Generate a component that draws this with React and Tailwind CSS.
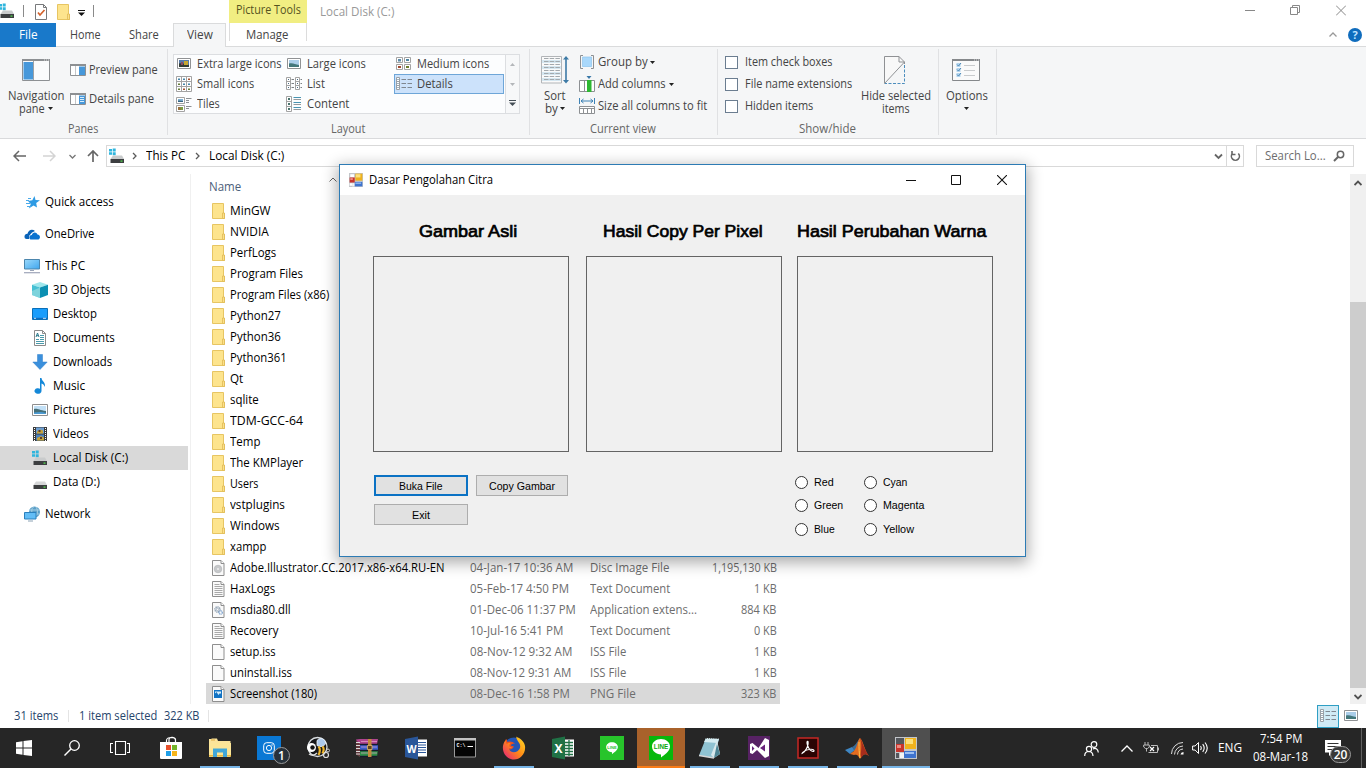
import React, { useLayoutEffect, useRef } from "react";

/* Single line label, condensed horizontally so that it spans `w` pixels. */
function Label({ w, className = "", children }) {
  const box = useRef(null);
  const ink = useRef(null);
  useLayoutEffect(() => {
    const fit = () => {
      box.current.style.width = `${w}px`;
      const natural = ink.current.offsetWidth;
      ink.current.style.transform = `scaleX(${(w + 0.6) / natural})`;
    };
    fit();
    document.fonts.ready.then(fit);
  }, [w]);
  return (
    <span ref={box} className={`block shrink-0 whitespace-nowrap ${className}`}>
      <span ref={ink} className="inline-block origin-left">{children}</span>
    </span>
  );
}

const Svg = ({ w = 16, h = 16, className = "", children }) => (
  <svg width={w} height={h} viewBox={`0 0 ${w} ${h}`} className={`block shrink-0 ${className}`} fill="none">
    {children}
  </svg>
);

/* ---------- file and sidebar icons ---------- */
const Drive = ({ win }) => (
  <Svg>
    {win && <path d="M0 1h3v2.500H0zM3.700 .5h3V3.500h-3zM0 4.200h3v2.500H0zM3.700 4.200h3v3h-3z" fill="#2fb5dd" />}
    <path d="M4 7.500h9L15 11H1.500z" fill={win ? "#c9cbcc" : "#d6d7d8"} />
    <path d="M1.500 11h13.500v4H1.500z" fill="#3c3e40" />
    <path d="M11.500 12.500h2v1.200h-2z" fill="#53e34d" />
  </Svg>
);
const Folder = () => (
  <Svg w={14} h={16}>
    <path d="M.5.5h11v10h1v5H.5z" fill="#fde48d" stroke="#e7c562" />
    <path d="M10.500 15.500v-5.500h2v5.500z" fill="#fbe08a" stroke="#dfba55" strokeWidth=".8" />
  </Svg>
);
const Page = ({ kind }) => (
  <Svg w={14} h={16}>
    <path d="M.5.5h8.500l3 3v12H.5z" fill="#fafafa" stroke="#8e8e8e" />
    <path d="M9 .5v3h3" stroke="#8e8e8e" fill="#fff" />
    {kind === "text" && <path d="M2.500 3.500h5M2.500 5.500h8M2.500 7.500h8M2.500 9.500h8M2.500 11.500h8M2.500 13.500h8" stroke="#a9a9a9" />}
    {kind === "disc" && (
      <>
        <circle cx="6" cy="9" r="3.800" fill="#c6c8ca" stroke="#adafb1" strokeWidth=".6" />
        <circle cx="6" cy="9" r="1" fill="#eee" />
      </>
    )}
    {kind === "dll" && (
      <>
        <circle cx="5.500" cy="7.500" r="2.500" stroke="#8c9eb0" strokeWidth="1.600" strokeDasharray="1.200 .7" />
        <circle cx="5.500" cy="7.500" r="1.200" stroke="#8c9eb0" strokeWidth=".7" />
        <circle cx="8.600" cy="10.500" r="1.700" stroke="#7fa4cf" strokeWidth="1.300" strokeDasharray="1 .5" />
      </>
    )}
    {kind === "image" && (
      <>
        <path d="M2 4h8v8H2z" fill="#1273c4" />
        <path d="M3 7.500L4.500 6l2 3 1.500-2 1 1v-2.500H3z" fill="#d7effc" />
      </>
    )}
  </Svg>
);
const QuickStar = () => (
  <Svg w={17}>
    <path d="M10.500 2l1 4 4.500.3-3.800 2.700.8 4.500-3.500-2-4.700 3 2-4.500L4 7l4.300-.7z" fill="#2e9be4" />
    <path d="M2 6.500h3M2 9.500h4M3 12.500h4M4 4.500h3" stroke="#49a9ea" />
  </Svg>
);
const Cloud = () => (
  <Svg w={17}>
    <path d="M1 12.500C-.5 9.500 1.500 7.500 3.500 7.700 4.500 3.500 8.500 2.500 11 5L8 6.500 5 10v3H2.500z" fill="#0a63b8" />
    <path d="M6.500 13.500c-2-1.300-1.300-4.500 1.300-4.500C8.500 5.800 12.500 5.500 13.500 8.500c3 .2 3.300 4 1 5z" fill="#0a73d0" />
  </Svg>
);
const Monitor = () => (
  <Svg>
    <defs>
      <linearGradient id="scr" x1="0" y1="0" x2="1" y2="1">
        <stop stopColor="#9bd9fb" />
        <stop offset="1" stopColor="#3fa6ee" />
      </linearGradient>
    </defs>
    <path d="M.5 1.500h15v9.500H.5z" fill="url(#scr)" stroke="#4c86ad" />
    <path d="M6 12.500h4" stroke="#9aa4b8" />
    <path d="M0 14.700h16" stroke="#9fa5b9" strokeWidth="1.200" />
  </Svg>
);
const Cube = () => (
  <Svg>
    <path d="M8 0l8 2.800L8 5.500 0 2.800z" fill="#9fe7ec" />
    <path d="M0 2.800l8 2.700V16L0 13z" fill="#45c0d3" />
    <path d="M16 2.800L8 5.500V16l8-3z" fill="#0b8fb2" />
    <path d="M0 9l8-3.500V16L0 13z" fill="#a4dfe2" opacity=".6" />
  </Svg>
);
const DesktopIcon = () => (
  <Svg>
    <path d="M.5 2.500h15v11H.5z" fill="#199dfc" stroke="#0a6fb8" />
    <path d="M1 11.800h14V13H1z" fill="#0c6cc0" />
    <path d="M2 12.300h2M11 12.300h3" stroke="#fff" strokeWidth=".8" />
  </Svg>
);
const DocumentsIcon = () => (
  <Svg>
    <path d="M2.500.5h8l3 3v12h-11z" fill="#fff" stroke="#8b8b8b" />
    <path d="M10.500.5v3h3" stroke="#8b8b8b" />
    <path d="M4 7l1.500-4L7 7M4.500 5.700h2" stroke="#2a7a8c" />
    <path d="M8 5.500h4M8 7.500h4M4 9.500h3M8 9.500h4M4 11.500h8M4 13.500h8" stroke="#4b9aab" />
  </Svg>
);
const DownloadIcon = () => (
  <Svg>
    <path d="M5.500.5h5v7.500h4.700L8 15.500.8 8h4.700z" fill="#3b90dc" stroke="#2f7fca" strokeWidth=".5" />
  </Svg>
);
const MusicIcon = () => (
  <Svg>
    <path d="M8 0h1.500c.3 3.500 4.500 4 3.300 9-.5-2-1.500-3-3.300-3.500V13a3.500 2.800 0 1 1-1.500-2.300z" fill="#1488d8" />
  </Svg>
);
const PictureIcon = () => (
  <Svg>
    <path d="M.5 2.500h15v11H.5z" fill="#fff" stroke="#8e8e8e" />
    <path d="M2 4h12v8H2z" fill="#c2e0f6" />
    <path d="M2 7c3-1 5 1 12 2v2H2z" fill="#466f78" />
    <path d="M2 10.500c4-.5 8-1 12 .5v1H2z" fill="#4c9bd3" />
  </Svg>
);
const VideoIcon = () => (
  <Svg>
    <path d="M1 1h14v14H1z" fill="#3a3a3a" />
    <path d="M2.500 2v13M13.500 2v13" stroke="#fff" strokeDasharray="1 1" />
    <path d="M4 1.500h8v6H4z" fill="#6d9ed2" />
    <path d="M4 8.500h8v6H4z" fill="#4b82bf" />
    <path d="M5 5.500l3-2 3 1v3H5zM5 12l4-2 3 1.500v3H5z" fill="#c5a23a" />
    <path d="M6.500 4h2v2h-2zM8 11h2v2H8z" fill="#5b3d2b" />
  </Svg>
);
const NetworkIcon = () => (
  <Svg w={17}>
    <circle cx="10.500" cy="6" r="5.500" fill="#5b9fc8" />
    <path d="M10 .5c-3 2-3 6 0 11M5.500 4h10M5.500 8h10M12 1c2 3 2 7-1 10" stroke="#b8daea" strokeWidth=".8" />
    <path d="M.5 6.500h11.500V13H.5z" fill="#62bdf6" stroke="#2b80bd" />
    <path d="M4 15h5" stroke="#8ba2b4" />
  </Svg>
);

/* ---------- ribbon icons ---------- */
const PaneIcon = ({ kind }) => (
  <Svg>
    <path d="M.5 2.500h15v11H.5z" fill="#fff" stroke="#8d9093" />
    <path d="M0 2h16v2H0z" fill="#8d9093" />
    <path d="M5.500 4v9" stroke="#c3c6c9" />
    <path d="M9 4.500h6V13H9z" fill="#4798da" />
    {kind === "details" && <path d="M10 6.500h4M10 8.500h4M10 10.500h4" stroke="#d9edfb" />}
  </Svg>
);
const NavPaneIcon = () => (
  <Svg w={28} h={22}>
    <path d="M.5.500h27v21H.5z" fill="#fafbfc" stroke="#8d9093" />
    <path d="M0 0h28v2H0z" fill="#8d9093" />
    <path d="M22 1h1M24 1h1M26 1h1" stroke="#fff" strokeWidth=".7" />
    <path d="M1.500 3h9.500v17.500H1.500z" fill="#4798da" />
    <path d="M11.500 2v19" stroke="#9da1a5" />
  </Svg>
);
const Photo = ({ dark }) => (
  <Svg>
    <path d="M1.500 2.500h13v10h-13z" fill="#fff" stroke="#909294" />
    <path d="M3 4h10v7H3z" fill={dark ? "#557aa8" : "#aacde9"} />
    <path d="M3 7.500c4-1 6 1 10 1.500v2H3z" fill={dark ? "#343d35" : "#43777b"} />
    {dark && <path d="M8 5h4v4H8z" fill="#c7a631" />}
    {dark && <path d="M5 6h2v3H5z" fill="#8e4a60" />}
  </Svg>
);
const MediumGrid = () => (
  <Svg>
    <path d="M.5 1.500h6v5h-6zM8.500 1.500h6v5h-6zM.5 8.500h6v5h-6zM8.500 8.500h6v5h-6z" fill="#fff" stroke="#a3a3a3" />
    <path d="M2 3h3v2.500H2z" fill="#5d8ba9" />
    <path d="M10 3h3v2h-3z" fill="#4c84a2" />
    <path d="M2 10h3v2H2z" fill="#a1462d" />
    <path d="M10 10h3v2h-3z" fill="#6c7d2c" />
  </Svg>
);
const SmallGrid = () => (
  <Svg>
    <path d="M.5.5h15v15H.5zM5.500.500v15M10.500.500v15M.5 5.500h15M.5 10.500h15" fill="#fff" stroke="#a3a3a3" />
    <path d="M2 2.500h2v1.500H2zM7 2.500h2v1.500H7zM7 7.500h2V9H7zM12 7.500h2V9h-2z" fill="#4384a7" />
    <path d="M12 2.500h2v1.500h-2zM7 12.500h2V14H7z" fill="#a4502e" />
    <path d="M2 7.500h2V9H2zM2 12.500h2V14H2zM12 12.500h2V14h-2z" fill="#667d37" />
  </Svg>
);
const ListIcon = () => (
  <Svg>
    <path d="M.5 1.500h4v12h-4zM9.500 1.500h4v12h-4zM.5 5.500h4M.5 9.500h4M9.500 5.500h4M9.500 9.500h4" fill="#fff" stroke="#a3a3a3" />
    <path d="M2 3.500h1M2 7.500h1M2 11.500h1M11 3.500h1M11 7.500h1M11 11.500h1" stroke="#476a85" />
    <path d="M5.500 3.500H8M5.500 7.500H8M5.500 11.500H8M14.500 3.500H16M14.500 7.500H16M14.500 11.500H16" stroke="#7d8184" />
  </Svg>
);
const DetailsIcon = () => (
  <Svg>
    <path d="M.5 1.500h3v12h-3zM.5 5.500h3M.5 9.500h3" fill="#fff" stroke="#9aa0a6" />
    <path d="M1.500 3.500h1M1.500 7.500h1M1.500 11.500h1" stroke="#476a85" />
    <path d="M5.500 3.500h4.500M5.500 7.500h4.500M5.500 11.500h4.500M11.500 3.500H16M11.500 7.500H16M11.500 11.500H16" stroke="#7f8790" />
  </Svg>
);
const TilesIcon = () => (
  <Svg>
    <path d="M.5 1.500h8v6h-8zM.5 9.500h8v6h-8z" fill="#fff" stroke="#a3a3a3" />
    <path d="M2 3h5v3H2z" fill="#7fb0d2" />
    <path d="M2 4.500l5 .5v1H2z" fill="#376481" />
    <path d="M2 11h3v3H2z" fill="#98703c" />
    <path d="M4 11h3v3H5z" fill="#7b9c42" />
    <path d="M10 2.500h5.500M10 4.500h3M10 6.500h3M10 10.500h5.500M10 12.500h3" stroke="#8b8f93" />
  </Svg>
);
const ContentIcon = () => (
  <Svg>
    <path d="M.5.5h5v15h-5zM.5 5.500h5M.5 10.500h5" fill="#fff" stroke="#a3a3a3" />
    <path d="M2 3h2M2 8h2M2 13h2" stroke="#49736d" strokeWidth="2" />
    <path d="M7.500 1.500H15M7.500 6.500H15M7.500 11.500H15" stroke="#4994b2" />
    <path d="M7.500 3.500H15M7.500 8.500H15M7.500 13.500H15" stroke="#95999c" />
  </Svg>
);
const SortIcon = () => (
  <Svg w={28} h={28}>
    <path d="M.5.5h20v26.500H.5z" fill="#fafafa" stroke="#b2b5b8" />
    <path d="M1 4h19v3H1zM1 10h19v3H1zM1 16h19v3H1zM1 22h19v3H1z" fill="#d5e7f1" />
    <path d="M3 2.500h16M3 5.500h16M3 8.500h16M3 11.500h16M3 14.500h16M3 17.500h16M3 20.500h16M3 23.500h16" stroke="#a3a9ad" strokeDasharray="4.500 1.200" />
    <path d="M25 2v24" stroke="#3d7aa6" strokeWidth="1.600" />
    <path d="M22 3.500l3-3.500 3 3.500zM22 24l3 3.500 3-3.500z" fill="#3d7aa6" />
  </Svg>
);
const GroupIcon = () => (
  <Svg>
    <path d="M4 1.500H1.500v13H4M12 1.500h2.500v13H12" stroke="#8d9093" />
    <path d="M3.500 3h9v9.500h-9z" fill="#a9d8fb" stroke="#8cc4ee" strokeWidth=".7" />
  </Svg>
);
const AddColIcon = () => (
  <Svg>
    <path d="M.5 4.500h15v11H.5zM5.500 4.500v11" fill="#fff" stroke="#8d9093" />
    <path d="M8 4h4.500v12H8z" fill="#2eb832" />
    <path d="M7.500 0h5l-2.500 3z" fill="#3978a8" />
  </Svg>
);
const SizeColIcon = () => (
  <Svg>
    <path d="M.5 0v6M15.500 0v6M2 3h12M4.500 1L2 3l2.500 2M11.500 1L14 3l-2.500 2" stroke="#3d82b5" />
    <path d="M.5 8.500h15v7H.5zM.5 10.500h15M4.500 10.500v5M8.500 10.500v5M12.500 10.500v5" fill="#fff" stroke="#8d9093" />
  </Svg>
);
const HideIcon = () => (
  <Svg w={22} h={28}>
    <path d="M.500 27V.5H15l5.500 5.500z" fill="#f8f8f8" />
    <path d="M20.500 8V6L15 .5H.5v27L20.500 6M15 .5V6h5.500" stroke="#8f9194" />
    <path d="M20.500 9v18.500H1" stroke="#4b8dbd" strokeDasharray="3 1.500" />
  </Svg>
);
const OptionsIcon = () => (
  <Svg w={28} h={22}>
    <path d="M.5.500h27v21H.5z" fill="#fafafa" stroke="#85888b" />
    <path d="M0 0h28v2H0z" fill="#85888b" />
    <path d="M22 1h1M24 1h1M26 1h1" stroke="#fff" strokeWidth=".7" />
    <path d="M4.500 4h4v4h-4zM4.500 9h4v4h-4zM4.500 14h4v4h-4z" fill="#b4d5ee" />
    <path d="M5 5.500L6.500 7 9 4M5 10.500L6.500 12 9 9M5 15.500L6.500 17 9 14" stroke="#4a86b4" />
    <path d="M12 6.500h11M12 11.500h11M12 16.500h11" stroke="#c9cbcd" />
  </Svg>
);
const Caret = ({ className = "" }) => (
  <Svg w={5} h={3} className={className}>
    <path d="M0 0h5L2.500 3z" fill="#222" />
  </Svg>
);
const Chevron = ({ className = "" }) => (
  <Svg w={5} h={8} className={className}>
    <path d="M1 1l3 3-3 3" stroke="#5a5a5a" strokeWidth="1.300" />
  </Svg>
);
const WinForms = ({ size = 14 }) => (
  <svg width={size} height={size} viewBox="0 0 22 22" className="block shrink-0">
    <path d="M0 0h22v22H0z" fill="#c3c6ca" />
    <path d={size > 14 ? "M1 1h8v6H1zM1 16h3v5H1z" : "M2 2h6v5H2zM1 16h4v4H1z"} fill={size > 14 ? "#54575c" : "#fff"} />
    <path d="M5 16h4v5H5z" fill="#f4f4f4" />
    <path d="M1 7h8v8H1z" fill="#c9342c" />
    <path d="M2 8h4v3H2z" fill="#ee8a80" />
    <path d="M10 1h11v11H10z" fill="#efb21d" />
    <path d="M11 2h7v5h-7z" fill="#fbe07c" />
    <path d="M9 14h12v7H9z" fill="#3f74cf" />
    <path d="M10 15h9v2h-9z" fill="#9dc0f2" />
  </svg>
);

/* ---------- top of the explorer window ---------- */
function TitleBar() {
  return (
    <div className="flex h-[23px] shrink-0 items-start">
      <div className="-ml-px pt-[3px]"><Drive win /></div>
      <div className="ml-[8px] mt-[5px] h-[12px] w-px bg-[#8a8a8a]" />
      <Svg w={12} className="ml-[11px] mt-[4px]">
        <path d="M.5.500h8l3 3v12H.5z" fill="#fff" stroke="#77797b" />
        <path d="M8.500.500v3h3" stroke="#77797b" />
        <path d="M3 8.500L5 11l4.500-5" stroke="#d3622c" strokeWidth="1.700" />
      </Svg>
      <div className="ml-[10px] mt-[4px]"><Folder /></div>
      <Svg w={7} h={6} className="ml-[7px] mt-[10px]">
        <path d="M0 .5h7" stroke="#111" />
        <path d="M0 2.500h7L3.500 6z" fill="#111" />
      </Svg>
      <div className="ml-[8px] mt-[5px] h-[12px] w-px bg-[#8a8a8a]" />
      <div className="ml-[135px] flex h-[23px] w-[78px] justify-center bg-[#f1ee82] text-[#55531f]">
        <Label w={64} className="leading-[20px]">Picture Tools</Label>
      </div>
      <Label w={74} className="ml-[13px] leading-[24px] text-[#999]">Local Disk (C:)</Label>
      <div className="ml-auto flex pr-[20px] pt-[5px]">
        <Svg w={10} h={11}><path d="M0 5.500h10" stroke="#888" /></Svg>
        <Svg w={10} h={11} className="ml-[35px]"><path d="M.5 2.500h7v7h-7zM2.500 2.500v-2h7v7h-2" stroke="#888" /></Svg>
        <Svg w={10} h={11} className="ml-[36px]"><path d="M0 .5l10 10M10 .5l-10 10" stroke="#888" /></Svg>
      </div>
    </div>
  );
}

function Tabs() {
  return (
    <div className="flex h-[24px] shrink-0 leading-[24px] text-[#444]">
      <div className="flex w-[56px] justify-center bg-[#1979ca] text-white"><Label w={18}>File</Label></div>
      <div className="flex w-[117px] border-b border-[#dadbdc] pl-[14px]">
        <Label w={30}>Home</Label>
        <Label w={29} className="ml-[29px]">Share</Label>
      </div>
      <div className="flex w-[53px] justify-center border-x border-t border-[#dadbdc] bg-[#f5f6f7] leading-[22px]"><Label w={25}>View</Label></div>
      <div className="w-[3px] border-b border-[#dadbdc]" />
      <div className="flex w-[78px] border-b border-[#dadbdc]">
        <div className="h-[18px] w-px bg-[#dcdcdc]" />
        <Label w={42} className="ml-[16px]">Manage</Label>
        <div className="ml-auto h-[18px] w-px bg-[#dcdcdc]" />
      </div>
      <div className="flex grow items-center justify-end border-b border-[#dadbdc] pr-[4px]">
        <Svg w={8} h={5} className="mr-[11px]"><path d="M.5 4.500L4 1l3.500 3.500" stroke="#999" strokeWidth="1.300" /></Svg>
        <div className="flex h-[14px] w-[14px] items-center justify-center rounded-full bg-[#0f6cbd] text-[11px] font-bold leading-[14px] text-[#bfe3ff]">?</div>
      </div>
    </div>
  );
}

function Group({ className, title, tw, children }) {
  return (
    <div className={`relative flex shrink-0 flex-col ${className}`}>
      <div className="flex h-[75px]">{children}</div>
      <div className="flex h-[14px] justify-center pr-[3px] leading-[14px] text-[#666]">{title && <Label w={tw}>{title}</Label>}</div>
      <div className="absolute right-0 top-[2px] h-[86px] w-px bg-[#e0e1e3]" />
    </div>
  );
}

function BigButton({ className = "", icon, children }) {
  return (
    <div className={`flex flex-col items-center leading-[13px] ${className}`}>
      <div className="flex h-[42px] items-center pt-[4px]">{icon}</div>
      {children}
    </div>
  );
}

function ViewCell({ icon, w, active, children }) {
  return (
    <div className={`flex h-[20px] items-center gap-[5px] border pl-px ${active ? "border-[#6ea6d8] bg-[#cce2fb]" : "border-transparent"}`}>
      {icon}
      <Label w={w} className="leading-[18px]">{children}</Label>
    </div>
  );
}

const Check = ({ w, children }) => (
  <div className="flex h-[22px] items-center gap-[7px]">
    <div className="h-[13px] w-[13px] border border-[#6b7d90] bg-white" />
    <Label w={w}>{children}</Label>
  </div>
);

function Ribbon() {
  return (
    <div className="flex h-[92px] shrink-0 border-b border-[#d9dadc] bg-[#f5f6f7] text-[#444]">
      <Group className="w-[168px]" title="Panes" tw={30}>
        <BigButton className="w-[70px] pl-[2px]" icon={<NavPaneIcon />}>
          <Label w={56}>Navigation</Label>
          <div className="flex items-center gap-[4px]"><Label w={25}>pane</Label><Caret /></div>
        </BigButton>
        <div className="flex flex-col gap-[13px] pt-[15px]">
          <div className="flex h-[16px] items-center gap-[3px]"><PaneIcon /><Label w={68}>Preview pane</Label></div>
          <div className="flex h-[16px] items-center gap-[3px]"><PaneIcon kind="details" /><Label w={64}>Details pane</Label></div>
        </div>
      </Group>
      <Group className="w-[362px]" title="Layout" tw={34}>
        <div className="ml-[5px] mt-[7px] flex h-[60px] w-[347px] border border-[#dcdee1] bg-[#fcfdfe]">
          <div className="-mt-px grid w-[331px] grid-cols-[110px_110px_110px] grid-rows-[20px_20px_20px]">
            <ViewCell icon={<Photo dark />} w={84}>Extra large icons</ViewCell>
            <ViewCell icon={<Photo />} w={58}>Large icons</ViewCell>
            <ViewCell icon={<MediumGrid />} w={72}>Medium icons</ViewCell>
            <ViewCell icon={<SmallGrid />} w={57}>Small icons</ViewCell>
            <ViewCell icon={<ListIcon />} w={17}>List</ViewCell>
            <ViewCell icon={<DetailsIcon />} w={35} active>Details</ViewCell>
            <ViewCell icon={<TilesIcon />} w={22}>Tiles</ViewCell>
            <ViewCell icon={<ContentIcon />} w={42}>Content</ViewCell>
          </div>
          <div className="flex grow flex-col items-center border-l border-[#dcdee1] bg-[#f7f8f9]">
            <Svg w={5} h={3} className="mt-[8px]"><path d="M0 3h5L2.500 0z" fill="#b4b7ba" /></Svg>
            <Svg w={5} h={3} className="mt-[17px]"><path d="M0 0h5L2.500 3z" fill="#b4b7ba" /></Svg>
            <Svg w={7} h={6} className="mt-[14px]"><path d="M0 .5h7" stroke="#444d55" /><path d="M0 2.500h7L3.500 6z" fill="#444d55" /></Svg>
          </div>
        </div>
      </Group>
      <Group className="w-[188px]" title="Current view" tw={65}>
        <BigButton className="w-[49px]" icon={<SortIcon />}>
          <Label w={21}>Sort</Label>
          <div className="flex items-center gap-[3px]"><Label w={12}>by</Label><Caret /></div>
        </BigButton>
        <div className="flex flex-col pt-[4px]">
          <div className="flex h-[22px] items-center"><GroupIcon /><Label w={49} className="ml-[3px] mr-[3px]">Group by</Label><Caret /></div>
          <div className="flex h-[22px] items-center"><AddColIcon /><Label w={67} className="ml-[3px] mr-[4px]">Add columns</Label><Caret /></div>
          <div className="flex h-[22px] items-center"><SizeColIcon /><Label w={109} className="ml-[3px]">Size all columns to fit</Label></div>
        </div>
      </Group>
      <Group className="w-[221px]" title="Show/hide" tw={56}>
        <div className="flex w-[140px] flex-col pl-[7px] pt-[4px]">
          <Check w={87}>Item check boxes</Check>
          <Check w={107}>File name extensions</Check>
          <Check w={68}>Hidden items</Check>
        </div>
        <BigButton className="w-[74px]" icon={<HideIcon />}>
          <Label w={69}>Hide selected</Label>
          <Label w={27}>items</Label>
        </BigButton>
      </Group>
      <Group className="w-[58px]">
        <BigButton className="w-[54px]" icon={<OptionsIcon />}>
          <Label w={41}>Options</Label>
          <Caret className="mt-[5px]" />
        </BigButton>
      </Group>
    </div>
  );
}

function AddressBar() {
  return (
    <div className="flex h-[35px] shrink-0 items-start pt-[6px]">
      <div className="flex h-[22px] w-[106px] items-center">
        <Svg w={13} h={12} className="ml-[13px]"><path d="M6 1L1 6l5 5M1 6h12" stroke="#666" strokeWidth="1.500" /></Svg>
        <Svg w={13} h={12} className="ml-[17px]"><path d="M7 1l5 5-5 5M12 6H0" stroke="#d4d4d4" strokeWidth="1.500" /></Svg>
        <Svg w={7} h={5} className="ml-[13px]"><path d="M.5 1l3 3 3-3" stroke="#777" strokeWidth="1.300" /></Svg>
        <Svg w={12} h={12} className="ml-[11px]"><path d="M1 6l5-5 5 5M6 1v11" stroke="#666" strokeWidth="1.700" /></Svg>
      </div>
      <div className="flex h-[22px] w-[1138px] items-center border border-[#d9d9d9] text-black">
        <div className="ml-[2px]"><Drive win /></div>
        <Chevron className="ml-[7px]" />
        <Label w={39} className="ml-[9px]">This PC</Label>
        <Chevron className="ml-[10px]" />
        <Label w={75} className="ml-[9px]">Local Disk (C:)</Label>
        <Svg w={9} h={7} className="ml-auto"><path d="M1 1.500l3.500 3.500L8 1.500" stroke="#666" strokeWidth="1.800" /></Svg>
        <div className="ml-[3px] flex h-full w-[17px] items-center justify-center border-l border-[#d9d9d9]">
          <Svg w={11} h={12}><path d="M2.500 3.500a4 4 0 1 0 5.800 0M2 1v3.500h3.500" stroke="#666" strokeWidth="1.600" /></Svg>
        </div>
      </div>
      <div className="ml-[12px] flex h-[22px] w-[98px] items-center border border-[#d9d9d9] text-[#6d6d6d]">
        <Label w={60} className="ml-[8px]">Search Lo...</Label>
        <Svg w={12} h={12} className="ml-[8px]"><circle cx="7.500" cy="4.500" r="3.200" stroke="#666" strokeWidth="1.500" /><path d="M5 7L1 11" stroke="#666" strokeWidth="1.900" /></Svg>
      </div>
    </div>
  );
}

/* ---------- body ---------- */
const places = [
  ["Quick access", 68, <QuickStar />, false, true],
  ["OneDrive", 49, <Cloud />, false, true],
  ["This PC", 40, <Monitor />, false, false],
  ["3D Objects", 57, <Cube />, true],
  ["Desktop", 43, <DesktopIcon />, true],
  ["Documents", 61, <DocumentsIcon />, true],
  ["Downloads", 59, <DownloadIcon />, true],
  ["Music", 32, <MusicIcon />, true],
  ["Pictures", 42, <PictureIcon />, true],
  ["Videos", 35, <VideoIcon />, true],
  ["Local Disk (C:)", 75, <Drive win />, true, false, true],
  ["Data (D:)", 46, <Drive />, true, true],
  ["Network", 45, <NetworkIcon />, false],
];

function Sidebar() {
  return (
    <div className="flex w-[191px] shrink-0 flex-col border-r border-[#f0f0f0] pt-[16px] text-black">
      {places.map(([name, w, icon, nested, gap, active]) => (
        <div
          key={name}
          className={`flex h-[24px] w-[188px] shrink-0 items-center ${nested ? "pl-[32px]" : "pl-[24px]"} ${gap ? "mb-[8px]" : ""} ${active ? "bg-[#d9d9d9]" : ""}`}
        >
          <div className="w-[21px]">{icon}</div>
          <Label w={w}>{name}</Label>
        </div>
      ))}
    </div>
  );
}

const folders = [
  ["MinGW", 40], ["NVIDIA", 38], ["PerfLogs", 46], ["Program Files", 72], ["Program Files (x86)", 99],
  ["Python27", 50], ["Python36", 50], ["Python361", 56], ["Qt", 13], ["sqlite", 28], ["TDM-GCC-64", 72],
  ["Temp", 30], ["The KMPlayer", 73], ["Users", 28], ["vstplugins", 54], ["Windows", 49], ["xampp", 36],
];
const files = [
  ["Adobe.Illustrator.CC.2017.x86-x64.RU-EN", 214, "disc", "04-Jan-17 10:36 AM", 103, "Disc Image File", 79, "1,195,130 KB", 64],
  ["HaxLogs", 45, "text", "05-Feb-17 4:50 PM", 98, "Text Document", 80, "1 KB", 22],
  ["msdia80.dll", 60, "dll", "01-Dec-06 11:37 PM", 105, "Application extens...", 106, "884 KB", 35],
  ["Recovery", 48, "text", "10-Jul-16 5:41 PM", 93, "Text Document", 80, "0 KB", 22],
  ["setup.iss", 45, "", "08-Nov-12 9:32 AM", 102, "ISS File", 36, "1 KB", 22],
  ["uninstall.iss", 61, "", "08-Nov-12 9:31 AM", 101, "ISS File", 36, "1 KB", 22],
  ["Screenshot (180)", 86, "image", "08-Dec-16 1:58 PM", 99, "PNG File", 45, "323 KB", 35],
];

function FileList() {
  return (
    <div className="flex grow flex-col pl-[15px] text-black">
      <div className="flex h-[26px] shrink-0 items-start pt-[3px] text-[#4c607a]">
        <Label w={32} className="ml-[3px] leading-[20px]">Name</Label>
        <Svg w={8} h={5} className="ml-[88px]"><path d="M.5 4.500L4 1l3.500 3.500" stroke="#666" /></Svg>
      </div>
      {folders.map(([name, w]) => (
        <div key={name} className="flex h-[21px] w-[574px] shrink-0 items-center pl-[6px]">
          <Folder />
          <Label w={w} className="ml-[4px]">{name}</Label>
        </div>
      ))}
      {files.map(([name, w, kind, date, dw, type, tw, size, sw]) => (
        <div key={name} className={`flex h-[21px] w-[574px] shrink-0 items-center pl-[6px] ${kind === "image" ? "bg-[#d9d9d9]" : ""}`}>
          <Page kind={kind} />
          <div className="ml-[4px] flex w-[240px]"><Label w={w}>{name}</Label></div>
          <div className="flex w-[120px] text-[#6d6d6d]"><Label w={dw}>{date}</Label></div>
          <div className="flex w-[110px] text-[#6d6d6d]"><Label w={tw}>{type}</Label></div>
          <div className="flex w-[76px] justify-end text-[#6d6d6d]"><Label w={sw}>{size}</Label></div>
        </div>
      ))}
    </div>
  );
}

function ScrollBar() {
  return (
    <div className="flex w-[16px] shrink-0 flex-col items-center justify-between bg-[#f0f0f0] pt-[6px] pb-[4px]">
      <Svg w={8} h={6}><path d="M.5 5L4 1.500 7.500 5" stroke="#505050" strokeWidth="1.800" /></Svg>
      <div className="mt-auto h-[386px] w-[16px] bg-[#cdcdcd]" />
      <Svg w={8} h={6} className="mt-[6px]"><path d="M.5 1L4 4.500 7.500 1" stroke="#505050" strokeWidth="1.800" /></Svg>
    </div>
  );
}

function StatusBar() {
  return (
    <div className="flex h-[24px] shrink-0 items-center text-[#26446b]">
      <Label w={44} className="ml-[14px]">31 items</Label>
      <div className="ml-[10px] h-[12px] w-px bg-[#e4e4e4]" />
      <Label w={78} className="ml-[10px]">1 item selected</Label>
      <Label w={35} className="ml-[7px]">322 KB</Label>
      <div className="ml-[9px] h-[12px] w-px bg-[#e4e4e4]" />
      <div className="ml-auto flex h-[23px] w-[22px] items-center justify-center border border-[#2f9fc4] bg-[#cfeaf5]"><DetailsIcon /></div>
      <div className="ml-[4px] mr-[7px]"><Photo /></div>
    </div>
  );
}

/* ---------- dialog ---------- */
const Radio = ({ w, children }) => (
  <div className="flex h-[13px] items-center gap-[6px] leading-[13px]">
    <div className="h-[13px] w-[13px] rounded-full border border-[#333] bg-white" />
    <Label w={w}>{children}</Label>
  </div>
);
const Picture = ({ w, title, className = "", shift = "" }) => (
  <div className={`flex w-[196px] flex-col items-center ${className}`}>
    <div className={`flex pt-px ${shift}`}>
      <Label w={w} className="text-[17px] leading-[24px] [-webkit-text-stroke:0.7px_#000]">{title}</Label>
    </div>
    <div className="mt-[12px] h-[196px] w-[196px] border border-[#646464]" />
  </div>
);
const Button = ({ w, className, children }) => (
  <div className={`flex h-[21px] items-center justify-center bg-[#e1e1e1] pr-[2px] ${className}`}><Label w={w}>{children}</Label></div>
);

function Dialog() {
  return (
    <div className="absolute left-[339px] top-[164px] flex h-[393px] w-[687px] flex-col border border-[#2d7bb4] bg-[#f0f0f0] text-black shadow-[0_4px_14px_2px_rgba(0,0,0,0.32)]">
      <div className="flex h-[30px] items-center bg-white pl-[9px]">
        <WinForms size={14} />
        <Label w={123} className="ml-[6px]">Dasar Pengolahan Citra</Label>
        <div className="ml-auto flex pr-[18px]">
          <Svg w={10} h={10}><path d="M0 5.500h10" stroke="#111" /></Svg>
          <Svg w={10} h={10} className="ml-[35px]"><path d="M.5.500h9v9h-9z" stroke="#111" /></Svg>
          <Svg w={10} h={10} className="ml-[36px]"><path d="M0 0l10 10M10 0L0 10" stroke="#111" strokeWidth="1.100" /></Svg>
        </div>
      </div>
      <div className="flex grow flex-col font-['Liberation_Sans',sans-serif] text-[11px]">
        <div className="flex pl-[33px] pt-[24px]">
          <Picture w={98} title="Gambar Asli" shift="pr-[7px]" />
          <Picture w={159} title="Hasil Copy Per Pixel" className="ml-[17px]" shift="pr-[3px]" />
          <Picture w={189} title="Hasil Perubahan Warna" className="ml-[15px]" shift="pr-[7px]" />
        </div>
        <div className="flex pl-[34px] pt-[23px]">
          <div className="flex flex-col gap-[8px]">
            <div className="flex gap-[8px]">
              <Button w={43} className="w-[94px] border-2 border-[#0b72c4]">Buka File</Button>
              <Button w={65} className="w-[92px] border border-[#adadad]">Copy Gambar</Button>
            </div>
            <Button w={17} className="w-[94px] border border-[#adadad]">Exit</Button>
          </div>
          <div className="ml-[227px] grid grid-cols-[69px_69px] grid-rows-[23px_24px_14px] pt-px">
            <Radio w={19}>Red</Radio>
            <Radio w={24}>Cyan</Radio>
            <Radio w={29}>Green</Radio>
            <Radio w={41}>Magenta</Radio>
            <Radio w={20}>Blue</Radio>
            <Radio w={30}>Yellow</Radio>
          </div>
        </div>
      </div>
    </div>
  );
}

/* ---------- taskbar ---------- */
const Store = () => (
  <Svg w={24} h={24}>
    <path d="M7.500 7V4.500C7.500.5 16.500.5 16.500 4.500V7M10 6V3.500c0-3.500 7-2.500 6.500 1" stroke="#fff" strokeWidth="1.200" />
    <path d="M1 6h22v15.500c0 1-.5 1.500-1.500 1.500h-19C1.500 23 1 22.500 1 21.500z" fill="#fff" />
    <path d="M7 9h5v5H7z" fill="#e8502b" /><path d="M13 9h5v5h-5z" fill="#74b52b" />
    <path d="M7 15h5v5H7z" fill="#1f9fe8" /><path d="M13 15h5v5h-5z" fill="#f6b51a" />
  </Svg>
);
const Explorer = () => (
  <Svg w={22} h={20}>
    <path d="M0 1h2l1-.5h5L9 3h12.500v16H0z" fill="#fae39a" />
    <path d="M0 5h22v13H0z" fill="#fbe597" />
    <path d="M0 17h22v1.500H0z" fill="#e9b93f" />
    <path d="M4 10.500h14V19h-4v-4.500H8V19H4z" fill="#40a7d8" />
    <path d="M2 2h4" stroke="#dba940" />
  </Svg>
);
const Insta = () => (
  <div className="relative flex h-[24px] w-[24px] items-center justify-center bg-[#0a78d4]">
    <Svg w={12} h={12}><rect x=".7" y=".7" width="10.600" height="10.600" rx="3" stroke="#fff" /><circle cx="6" cy="6" r="2.600" stroke="#fff" /><circle cx="9" cy="3" r=".7" fill="#fff" /></Svg>
    <div className="absolute left-[16px] top-[11px] h-[17px] w-[17px] rounded-full border border-[#9a9a9a] bg-[#27313a] text-center text-[12px] font-semibold leading-[15px] text-white">1</div>
  </div>
);
const Bee = () => (
  <Svg w={26} h={24}>
    <circle cx="12.500" cy="11" r="9.500" fill="#17181a" stroke="#d9dde0" strokeWidth="1.300" />
    <path d="M12 4.500c4-4 9-1 8.500 3-1 3-5 4-8.500 2z" fill="#acc9eb" stroke="#f2f6fa" strokeWidth=".8" />
    <path d="M13.500 10.500c2 2 1.500 6 0 8.500M17.500 10.500c2 2 1 5 0 7" stroke="#efb62c" strokeWidth="2.200" />
    <circle cx="6.500" cy="11.500" r="4.500" fill="#fff" /><circle cx="7.500" cy="11.500" r="2.200" fill="#111" />
    <path d="M4 18c3 2 6 1 8-1" stroke="#ddd" strokeWidth="1.500" />
    <circle cx="21" cy="19" r="2.500" stroke="#ddd" strokeWidth="1.200" /><circle cx="23" cy="14.500" r="1.500" stroke="#ccc" />
  </Svg>
);
const Rar = () => (
  <Svg w={24} h={20}>
    <path d="M1 1.500L5 1h18l-1 5.500H2z" fill="#b0458f" /><path d="M2 6.500h21v6H2z" fill="#3b5fcb" /><path d="M1 12.500h22l-1 6H4z" fill="#2f9148" />
    <path d="M1 2l4 4v13l-4-2.500z" fill="#62383c" />
    <path d="M1 4.500h4M1 7.500h4M1 10.500h4M1 13.500h4M1 16h4" stroke="#ddd" />
    <path d="M6 3.500h16M6 9h16M6 15h16" stroke="#e3a8cf" strokeWidth=".7" />
    <path d="M5 6.500h18M5 12.500h18M5 18.500h17" stroke="#171a2c" strokeWidth="1.300" />
    <path d="M13 1h3.500v18H13z" fill="#c28a3c" /><path d="M12.500 7.500h4.500v4h-4.500z" fill="#5f421d" stroke="#dfb864" strokeWidth=".8" />
  </Svg>
);
const Office = ({ letter, color }) => (
  <Svg w={24} h={24}>
    <path d="M11 3.500h12v17H11z" fill="#fff" />
    {letter === "W" ? (
      <path d="M14 6.500h8M14 9h8M14 11.500h8M14 14h8M14 16.500h8" stroke={color} />
    ) : (
      <path d="M14 6.500h8M14 9.500h8M14 12.500h8M14 15.500h8M14 18.500h8M18 4v16" stroke={color} strokeWidth="1.300" />
    )}
    <path d="M1 3l13-2.500v23L1 21z" fill={color} />
    <text x="7.500" y="16.500" textAnchor="middle" fill="#fff" fontSize={letter === "W" ? 10.5 : 12} fontWeight="700" fontFamily="Open Sans">{letter}</text>
  </Svg>
);
const Cmd = () => (
  <Svg w={22} h={20}>
    <path d="M.500.500h21v18.500H.5z" fill="#050505" stroke="#9a9a9a" /><path d="M0 0h22v2.500H0z" fill="#c3c3c3" />
    <text x="2.500" y="8.500" fill="#fff" fontSize="5" fontFamily="Liberation Mono" fontWeight="700">C:\</text>
    <path d="M13.500 8.500h5.500" stroke="#fff" />
  </Svg>
);
const Firefox = () => (
  <Svg w={24} h={24}>
    <defs><linearGradient id="fox" x1="1" y1="0" x2="0" y2="1"><stop stopColor="#ffe226" /><stop offset=".5" stopColor="#ff8a16" /><stop offset="1" stopColor="#e31587" /></linearGradient></defs>
    <circle cx="12" cy="12" r="10.500" fill="#2456b5" />
    <path d="M14.500 1c4 1 8 5 8.500 9 1 8-5 13.500-11 13.500C5 23.500 0 17 1 10c.5-3 1.500-5 3-6l1 3c2-1 4-1 6 0-2 .5-3 2-3 3l3 1c-1 2-3 2-4 2 2 5 9 4 11-1 .8-4-1-5-2.500-7.500-1-2-1.500-3-1-4.500z" fill="url(#fox)" />
    <path d="M4 3.500l1 3.500c2-1.500 4-1 6 0-3 .5-3 2-3 3l3 1c-1 2-3 2-4 2" stroke="#ed511f" strokeWidth="1.300" />
  </Svg>
);
const LineIcon = ({ big }) => (
  <Svg w={24} h={24}>
    <path d="M0 0h24v24H0z" fill={big ? "#07b80c" : "#27c42b"} />
    <g transform={big ? "translate(2 2)" : "translate(5.500 5.500) scale(.65)"}>
      <path d="M10 1c5 0 9 3.200 9 7.500 0 5-6 8.500-9 11v-3C5 16 1 13 1 8.500 1 4.200 5 1 10 1z" fill="#fff" />
      <text x="10" y="11" textAnchor="middle" fill={big ? "#07a80c" : "#27c42b"} fontSize="6.300" fontWeight="800" fontFamily="Liberation Sans">LINE</text>
    </g>
  </Svg>
);
const Notepad = () => (
  <Svg w={24} h={22}>
    <path d="M8 1l13 1-5 19L1 18.500z" fill="#8fc3d2" /><path d="M8 1l13 1-1.500 4L6 5z" fill="#d5edf2" />
    <path d="M19 3l3 14-6 4-3-3z" fill="#d9e9ec" /><path d="M16 21l6-4-3-10z" fill="#4e8594" />
    <path d="M1 18.500L16 21" stroke="#d7d7d7" strokeWidth="1.500" /><path d="M8 1.500h13" stroke="#777" strokeDasharray="1 1" />
  </Svg>
);
const VS = () => (
  <Svg w={22} h={24}>
    <path d="M0 0h22v24H0z" fill="#68217a" opacity=".75" />
    <path d="M2 8l2.500-1 6 5L17 2l4 2v16l-4 2-8-8-4.500 4L2 17z" fill="#fff" />
    <path d="M4 10v5l2.500-2.500zM17 8.500v7L12 12z" fill="#68217a" />
  </Svg>
);
const Acrobat = () => (
  <Svg w={22} h={22}>
    <path d="M1 1h20v20H1z" fill="#2a0504" stroke="#c52825" strokeWidth="1.500" />
    <path d="M5 16.500c3-1 7-8 6-12-1.500-1-1.500 3 1 7 1.500 2.500 4 3.500 5 2.500.5-1.500-2.500-2-5-1.500-3 .5-7 2.500-7 4z" stroke="#fff" strokeWidth="1.100" />
  </Svg>
);
const Matlab = () => (
  <Svg w={24} h={22}>
    <path d="M0 13l7-3 3 3-5 4z" fill="#3f87c4" /><path d="M7 10c3-1 5-5 8-9l-3 12-2 2z" fill="#3d6b93" />
    <path d="M5 17l4-3c3-3 4-12 6-13 3 2 5 14 9 18-4-3-6-2-9 3-2-4-3-5-6-4z" fill="#e26c20" />
    <path d="M15 1c2 2 4 11 9 18-4-3-5-2-8 2-1-6 2-12-1-20z" fill="#a72d1c" /><path d="M14 5c0 6 0 11 1 16" stroke="#ffc34d" />
  </Svg>
);

const apps = [
  [<Store />, ""], [<Explorer />, "line"], [<Insta />, ""], [<Bee />, ""], [<Rar />, ""],
  [<Office letter="W" color="#2a5699" />, ""], [<Cmd />, ""], [<Firefox />, "line"], [<Office letter="X" color="#1f7145" />, ""],
  [<LineIcon />, ""], [<LineIcon big />, "alert"], [<Notepad />, "line"], [<VS />, "line"], [<Acrobat />, "line"],
  [<Matlab />, "line"], [<WinForms size={22} />, "active"],
];
const slotStyle = {
  "": ["", ""],
  line: ["", "w-[40px] bg-[#76b4e6]"],
  alert: ["bg-[#a9622b]", "w-[48px] bg-[#f87b17]"],
  active: ["bg-[#4f4f4f]", "w-[48px] bg-[#76b4e6]"],
};

function Taskbar() {
  return (
    <div className="flex h-[40px] shrink-0 items-stretch bg-[#262626] text-white">
      <div className="flex w-[48px] items-center justify-center">
        <Svg><path d="M0 2.300l6.500-1v6.200H0zM7.500 1.100L16 0v7.500H7.500zM0 8.500h6.500v6.200L0 13.700zM7.500 8.500H16V16l-8.500-1.100z" fill="#fff" /></Svg>
      </div>
      <div className="flex w-[48px] items-center justify-center">
        <Svg><circle cx="10.500" cy="5.500" r="4.800" stroke="#fff" strokeWidth="1.300" /><path d="M7 9L.5 15.500" stroke="#fff" strokeWidth="1.400" /></Svg>
      </div>
      <div className="flex w-[48px] items-center justify-center">
        <Svg w={20} h={16}><path d="M5.500 1.500h10v13h-10zM3 3.500H.5v9H3M17 3.500h2.500v9H17" stroke="#fff" strokeWidth="1.100" /></Svg>
      </div>
      <div className="ml-[3px] flex gap-px">
        {apps.map(([icon, state], i) => (
          <div key={i} className={`flex w-[48px] flex-col items-center ${slotStyle[state][0]}`}>
            <div className="flex h-[38px] items-center justify-center pt-[2px]">{icon}</div>
            <div className={`h-[2px] ${slotStyle[state][1]}`} />
          </div>
        ))}
      </div>
      <div className="ml-auto flex items-center">
        <Svg w={15} h={15}><circle cx="10" cy="3.500" r="2.800" stroke="#fff" strokeWidth="1.200" /><circle cx="5" cy="8" r="2.600" stroke="#fff" strokeWidth="1.200" /><path d="M.7 15c0-6 8-6 8.300 0M9 8c3-1.500 5 .5 5.300 3.500" stroke="#fff" strokeWidth="1.200" /></Svg>
        <Svg w={12} h={7} className="ml-[22px]"><path d="M.5 6.500L6 1l5.500 5.500" stroke="#fff" strokeWidth="1.300" /></Svg>
        <Svg w={17} h={14} className="ml-[10px]"><path d="M2 1v3M5 1v3M.7 4h5.600v2L4.500 7.500h-2L.7 6zM3.500 7v3.500M8 4.500h6.500v7H5.500" stroke="#bbb" /><path d="M15.500 6.500v3" stroke="#bbb" /><path d="M7 6l4 4M11 6l-4 4" stroke="#fff" strokeWidth="1.200" /></Svg>
        <Svg w={13} h={13} className="ml-[11px]"><path d="M.5 12A11.500 11.500 0 0 1 12 .5M3.500 12.500A9 9 0 0 1 12 4M6.500 12.500A6 6 0 0 1 12 7" stroke="#ddd" /><path d="M9.500 12.500A3 3 0 0 1 12.500 10v2.500z" fill="#fff" /></Svg>
        <Svg w={17} h={14} className="ml-[8px]"><path d="M.6 5h2.500L6.500 1.500v11L3.100 9H.6z" stroke="#fff" /><path d="M8.500 5q1.500 2 0 4M10.700 3.200q3 3.800 0 7.600M13 1.500q4.500 5.500 0 11" stroke="#fff" strokeWidth="1.100" /></Svg>
        <Label w={23} className="ml-[9px]">ENG</Label>
        <div className="ml-[12px] flex flex-col items-center leading-[18px]">
          <Label w={42}>7:54 PM</Label>
          <Label w={55}>08-Mar-18</Label>
        </div>
        <div className="relative ml-[17px] h-[40px] w-[36px]">
          <Svg w={16} h={16} className="mt-[12px]"><path d="M0 0h16v12.500H8L4 16v-3.500H0z" fill="#fff" /><path d="M2.500 3.500h11M2.500 6.500h11M2.500 9.500h9" stroke="#333" /></Svg>
          <div className="absolute left-[5px] top-[18px] flex h-[17px] w-[21px] items-center justify-center rounded-full border border-[#9a9a9a] bg-[#383838] text-[12px] font-semibold leading-[15px]">20</div>
        </div>
        <div className="mr-[4px] h-[40px] w-px bg-[#606060]" />
      </div>
    </div>
  );
}

export default function App() {
  return (
    <div className="relative flex h-[768px] w-[1366px] flex-col overflow-hidden bg-white font-['Open_Sans',sans-serif] text-[12px] leading-[16px]">
      <TitleBar />
      <Tabs />
      <Ribbon />
      <AddressBar />
      <div className="flex h-[530px] shrink-0">
        <Sidebar />
        <FileList />
        <ScrollBar />
      </div>
      <StatusBar />
      <Dialog />
      <Taskbar />
    </div>
  );
}
